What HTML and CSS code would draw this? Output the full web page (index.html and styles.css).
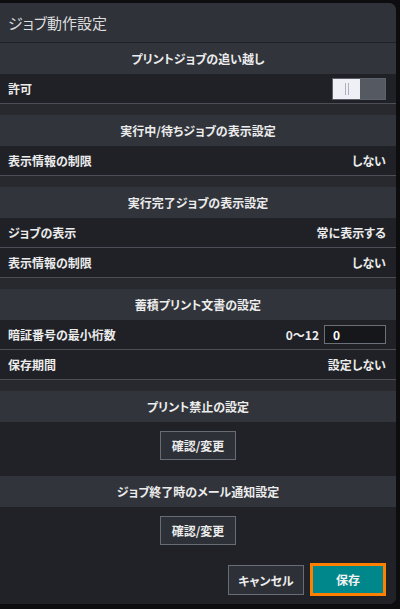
FILE: index.html
```html
<!DOCTYPE html>
<html lang="ja">

<head>
    <meta charset="UTF-8">
    <meta name="viewport" content="width=device-width, initial-scale=1.0">
    <title>ジョブ動作設定</title>
    <link rel="stylesheet" href="styles.css">
</head>

<body>
    <div class="dialog">
        <div class="dialog-title">ジョブ動作設定</div>

        <div class="section">
            <div class="section-header">プリントジョブの追い越し</div>
            <div class="row">
                <span>許可</span>
                <div class="toggle">
                    <div class="toggle-knob"><i></i><i></i></div>
                    <div class="toggle-off"></div>
                </div>
            </div>
        </div>

        <div class="section">
            <div class="section-header">実行中/待ちジョブの表示設定</div>
            <div class="row">
                <span>表示情報の制限</span>
                <span>しない</span>
            </div>
        </div>

        <div class="section">
            <div class="section-header">実行完了ジョブの表示設定</div>
            <div class="row">
                <span>ジョブの表示</span>
                <span>常に表示する</span>
            </div>
            <div class="row">
                <span>表示情報の制限</span>
                <span>しない</span>
            </div>
        </div>

        <div class="section">
            <div class="section-header">蓄積プリント文書の設定</div>
            <div class="row">
                <span>暗証番号の最小桁数</span>
                <div class="range">
                    <span>0〜12</span>
                    <input class="num-input" type="text" value="0">
                </div>
            </div>
            <div class="row">
                <span>保存期間</span>
                <span>設定しない</span>
            </div>
        </div>

        <div class="section section-tight">
            <div class="section-header">プリント禁止の設定</div>
            <div class="button-block">
                <button class="dlg-button">確認/変更</button>
            </div>
            <div class="section-header">ジョブ終了時のメール通知設定</div>
            <div class="button-block">
                <button class="dlg-button">確認/変更</button>
            </div>
        </div>

        <div class="dialog-footer">
            <button class="dlg-button">キャンセル</button>
            <button class="dlg-button dlg-button-save">保存</button>
        </div>
    </div>
</body>

</html>
```

FILE: styles.css
```css
body {
    margin: 0;
    background-color: #0d0d0f;
    font-family: "Noto Sans CJK JP", "Noto Sans", sans-serif;
    font-feature-settings: "palt";
    color: #ececec;
}

.dialog {
    width: 396px;
    height: 601px;
    margin-top: 3px;
    background-color: #27292f;
    border-radius: 0 7px 7px 0;
    overflow: hidden;
    display: flex;
    flex-direction: column;
}

.dialog-title {
    height: 40px;
    padding-left: 8px;
    display: flex;
    align-items: center;
    font-size: 15px;
    color: #dcdcdc;
    background-color: #2f3239;
    border-bottom: 1px solid #1f2126;
}

.section {
    margin-bottom: 11px;
}

.section-header {
    height: 31px;
    display: flex;
    align-items: center;
    justify-content: center;
    font-size: 12px;
    font-weight: 700;
    background-color: #31343b;
}

.row {
    height: 29px;
    padding: 0 10px 0 8px;
    display: flex;
    align-items: center;
    justify-content: space-between;
    font-size: 12px;
    font-weight: 700;
    background-color: #1f2126;
    border-bottom: 1px solid #4b4e56;
}

/* toggle switch, currently "on" side shown white */
.toggle {
    width: 54px;
    height: 22px;
    box-sizing: border-box;
    border: 1px solid #5d616a;
    display: flex;
}

.toggle-knob {
    width: 27px;
    background-color: #eef0f6;
    display: flex;
    align-items: center;
    justify-content: center;
    gap: 2px;
}

.toggle-knob i {
    width: 1px;
    height: 12px;
    background-color: #aeb2be;
}

.toggle-off {
    flex: 1;
    background-color: #555962;
}

.range {
    display: flex;
    align-items: center;
    gap: 5px;
}

.num-input {
    width: 62px;
    height: 19px;
    box-sizing: border-box;
    padding: 0 8px;
    border: 1px solid #6b6f78;
    background-color: #16171b;
    color: #fff;
    font-family: inherit;
    font-size: 12px;
    font-weight: 700;
}

.section-tight {
    margin-bottom: 0;
}

.button-block {
    padding: 9px 0 16px;
    display: flex;
    justify-content: center;
    background-color: #202227;
}

.dlg-button {
    width: 76px;
    height: 29px;
    box-sizing: border-box;
    border: 1px solid #686c75;
    background-color: #2d3037;
    color: #ececec;
    font-family: inherit;
    font-feature-settings: "palt";
    font-size: 12px;
    font-weight: 700;
    cursor: pointer;
}

.dialog-footer {
    flex: 1;
    padding: 2px 10px 9px 0;
    display: flex;
    justify-content: flex-end;
    align-items: flex-end;
    gap: 6px;
    background-color: #202227;
}

.dialog-footer .dlg-button {
    height: 30px;
}

.dlg-button-save {
    height: 33px !important;
    margin-bottom: -1px;
    border: 3px solid #ff8000;
    background-color: #00878b;
    color: #f2f2f2;
}
```
